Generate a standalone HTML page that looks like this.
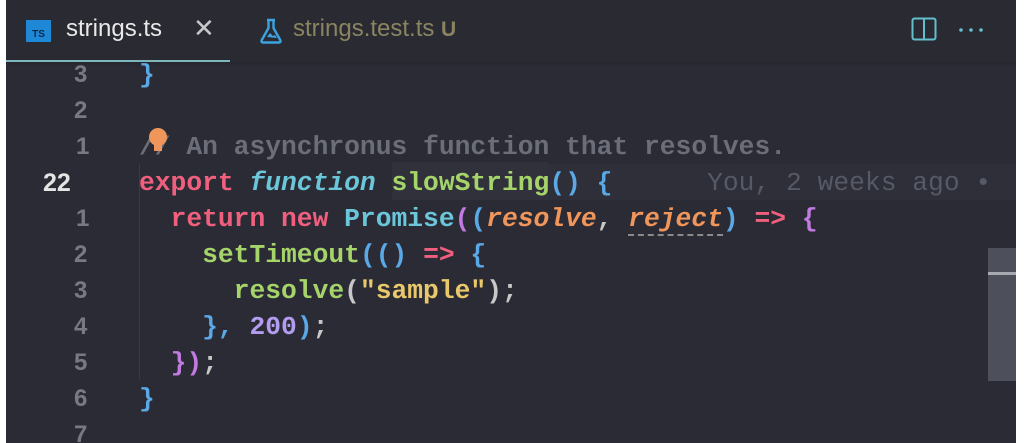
<!DOCTYPE html>
<html><head><style>
body{margin:0;width:1032px;height:443px;overflow:hidden;background:#fff;position:relative;font-family:"Liberation Mono",monospace}
#ed{position:absolute;left:6px;top:0;width:1010px;height:443px;background:#2b2b35;overflow:hidden}
.tabbar{position:absolute;left:0;top:0;width:1010px;height:62px;background:#2a2a33}
.tab{position:absolute;top:15px;font-family:"Liberation Sans",sans-serif;font-size:24px}
.ul{position:absolute;left:0;top:60px;width:224px;height:2px;background:#7eb6bd}
.code{position:absolute;left:0;top:57px;width:1010px}
.ln{position:absolute;height:36px;line-height:36px;font-size:24px;font-weight:bold;color:#777a85;font-family:"Liberation Sans",sans-serif}
.line{position:absolute;left:133px;height:36px;line-height:36px;font-size:26.3px;font-weight:bold;white-space:pre;color:#d0d0d0}
.r{color:#f0607e}.c{color:#6bc6d9}.g{color:#a5d46a}.b{color:#5aa9e6}.p{color:#c07ae0}.o{color:#f0965a}.y{color:#e8c86a}.n{color:#b49cf0}.w{color:#c8c8c8}.cm{color:#6b6e78}
i{font-style:italic}
</style></head><body>
<div id="ed">
<div class="tabbar">
<div style="position:absolute;left:20px;top:20px;width:25px;height:22px;background:#1e87d6;color:#0d2a44;font:bold 10px 'Liberation Sans',sans-serif;text-align:center;line-height:30px">TS</div>
<div class="tab" style="left:60px;color:#e8e8e8">strings.ts</div>
<div class="tab" style="left:187px;color:#c8c8c8;font-size:26px;top:13px">✕</div>
<svg style="position:absolute;left:253px;top:18px" width="24" height="26" viewBox="0 0 24 26"><path d="M8 2h8M9.5 2v8L2.5 22.5a1.5 1.5 0 0 0 1.3 2h16.4a1.5 1.5 0 0 0 1.3-2L14.5 10V2" fill="none" stroke="#3aa3e0" stroke-width="2.4"/><path d="M8 19l3-4 3 3 2-1 2 3z" fill="#3aa3e0"/></svg>
<div class="tab" style="left:287px;color:#8a8460">strings.test.ts <b style="font-size:21px">U</b></div>
<svg style="position:absolute;left:905px;top:17px" width="26" height="26"><rect x="1.5" y="1.5" width="23" height="21" rx="2" fill="none" stroke="#62c0cc" stroke-width="2"/><line x1="13" y1="2" x2="13" y2="22" stroke="#62c0cc" stroke-width="2"/></svg>
<svg style="position:absolute;left:952px;top:26px" width="30" height="8"><circle cx="3" cy="4" r="1.8" fill="#62c0cc"/><circle cx="13" cy="4" r="1.8" fill="#62c0cc"/><circle cx="23" cy="4" r="1.8" fill="#62c0cc"/></svg>
<div class="ul"></div>
</div>
<div style="position:absolute;left:0;top:62px;width:1010px;height:4px;background:linear-gradient(#20202880,transparent)"></div>
<div style="position:absolute;left:542px;top:164px;width:468px;height:36px;background:#2e2f39"></div>
<div style="position:absolute;left:386px;top:162px;width:156px;height:38px;background:#30313b"></div>
<div class="code">
<div class="ln" style="top:0;left:68px">3</div><div class="line" style="top:0"><span class="b">}</span></div>
<div class="ln" style="top:36px;left:68px">2</div>
<div class="ln" style="top:72px;left:70px">1</div><div class="line" style="top:72px"><span class="cm">// An asynchronus function that resolves.</span></div>
<div class="ln" style="top:108px;left:37px;color:#e4e4e4;font-size:25px">22</div><div class="line" style="top:108px"><span class="r">export</span> <i class="c">function</i> <span class="g">slowString</span><span class="b">()</span> <span class="b">{</span>      <span style="color:#555a66;font-weight:normal">You, 2 weeks ago • </span></div>
<div class="ln" style="top:144px;left:70px">1</div><div class="line" style="top:144px">  <span class="r">return</span> <span class="r">new</span> <span class="c">Promise</span><span class="p">(</span><span class="b">(</span><i class="o">resolve</i><span class="w">,</span> <i class="o" style="border-bottom:2px dashed #8a8a8a">reject</i><span class="b">)</span> <span class="r">=&gt;</span> <span class="p">{</span></div>
<div class="ln" style="top:180px;left:68px">2</div><div class="line" style="top:180px">    <span class="g">setTimeout</span><span class="b">(()</span> <span class="r">=&gt;</span> <span class="b">{</span></div>
<div class="ln" style="top:216px;left:68px">3</div><div class="line" style="top:216px">      <span class="g">resolve</span><span class="w">(</span><span class="y">"sample"</span><span class="w">);</span></div>
<div class="ln" style="top:252px;left:68px">4</div><div class="line" style="top:252px">    <span class="b">},</span> <span class="n">200</span><span class="b">)</span><span class="w">;</span></div>
<div class="ln" style="top:288px;left:68px">5</div><div class="line" style="top:288px">  <span class="p">})</span><span class="w">;</span></div>
<div class="ln" style="top:324px;left:68px">6</div><div class="line" style="top:324px"><span class="b">}</span></div>
<div class="ln" style="top:360px;left:68px">7</div>
</div>
<div style="position:absolute;left:133px;top:164px;width:1px;height:215px;background:#3a3b45"></div>
<div style="position:absolute;left:143px;top:128px;width:18px;height:18px;border-radius:50%;background:#f0965a"></div>
<div style="position:absolute;left:148px;top:143px;width:8px;height:8px;background:#f0965a"></div>
<div style="position:absolute;left:982px;top:248px;width:28px;height:133px;background:#4d4f5a"></div>
<div style="position:absolute;left:982px;top:272px;width:28px;height:3px;background:#a8a9b0"></div>
</div>
</body></html>
